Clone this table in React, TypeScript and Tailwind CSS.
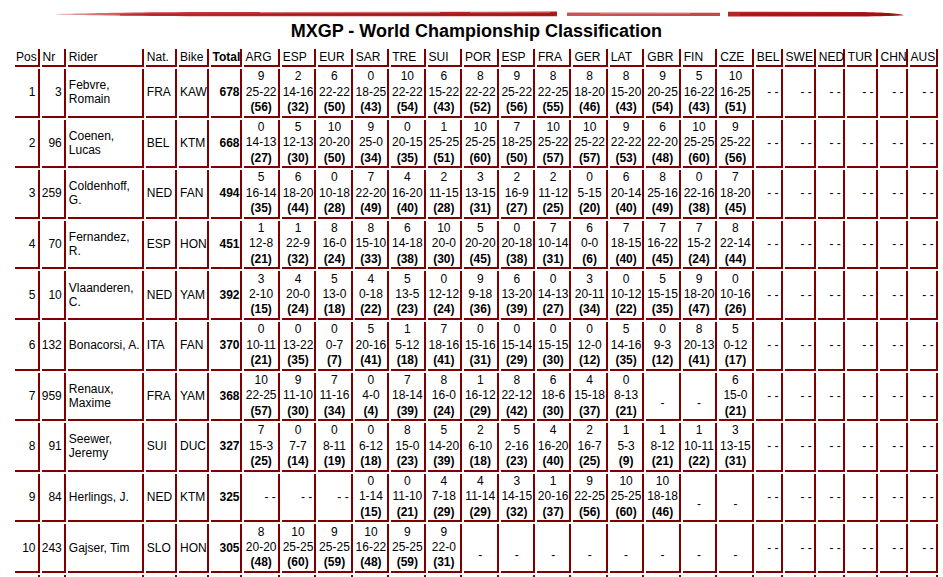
import React from 'react';

const ROUNDS = ['ARG', 'ESP', 'EUR', 'SAR', 'TRE', 'SUI', 'POR', 'ESP', 'FRA', 'GER', 'LAT', 'GBR', 'FIN', 'CZE'];
const EXTRA = ['BEL', 'SWE', 'NED', 'TUR', 'CHN', 'AUS'];

type Row = { pos: string; nr: string; name: string; nat: string; bike: string; total: string; r: string };

const ROWS: Row[] = [
  { pos: '1', nr: '3', name: 'Febvre, Romain', nat: 'FRA', bike: 'KAW', total: '678', r: '9 25-22 56|2 14-16 32|6 22-22 50|0 18-25 43|10 22-22 54|6 15-22 43|8 22-22 52|9 25-22 56|8 22-25 55|8 18-20 46|8 15-20 43|9 20-25 54|5 16-22 43|10 16-25 51' },
  { pos: '2', nr: '96', name: 'Coenen, Lucas', nat: 'BEL', bike: 'KTM', total: '668', r: '0 14-13 27|5 12-13 30|10 20-20 50|9 25-0 34|0 20-15 35|1 25-25 51|10 25-25 60|7 18-25 50|10 25-22 57|10 25-22 57|9 22-22 53|6 22-20 48|10 25-25 60|9 25-22 56' },
  { pos: '3', nr: '259', name: 'Coldenhoff, G.', nat: 'NED', bike: 'FAN', total: '494', r: '5 16-14 35|6 18-20 44|0 10-18 28|7 22-20 49|4 16-20 40|2 11-15 28|3 13-15 31|2 16-9 27|2 11-12 25|0 5-15 20|6 20-14 40|8 25-16 49|0 22-16 38|7 18-20 45' },
  { pos: '4', nr: '70', name: 'Fernandez, R.', nat: 'ESP', bike: 'HON', total: '451', r: '1 12-8 21|1 22-9 32|8 16-0 24|8 15-10 33|6 14-18 38|10 20-0 30|5 20-20 45|0 20-18 38|7 10-14 31|6 0-0 6|7 18-15 40|7 16-22 45|7 15-2 24|8 22-14 44' },
  { pos: '5', nr: '10', name: 'Vlaanderen, C.', nat: 'NED', bike: 'YAM', total: '392', r: '3 2-10 15|4 20-0 24|5 13-0 18|4 0-18 22|5 13-5 23|0 12-12 24|9 9-18 36|6 13-20 39|0 14-13 27|3 20-11 34|0 10-12 22|5 15-15 35|9 18-20 47|0 10-16 26' },
  { pos: '6', nr: '132', name: 'Bonacorsi, A.', nat: 'ITA', bike: 'FAN', total: '370', r: '0 10-11 21|0 13-22 35|0 0-7 7|5 20-16 41|1 5-12 18|7 18-16 41|0 15-16 31|0 15-14 29|0 15-15 30|0 12-0 12|5 14-16 35|0 9-3 12|8 20-13 41|5 0-12 17' },
  { pos: '7', nr: '959', name: 'Renaux, Maxime', nat: 'FRA', bike: 'YAM', total: '368', r: '10 22-25 57|9 11-10 30|7 11-16 34|0 4-0 4|7 18-14 39|8 16-0 24|1 16-12 29|8 22-12 42|6 18-6 30|4 15-18 37|0 8-13 21|-|-|6 15-0 21' },
  { pos: '8', nr: '91', name: 'Seewer, Jeremy', nat: 'SUI', bike: 'DUC', total: '327', r: '7 15-3 25|0 7-7 14|0 8-11 19|0 6-12 18|8 15-0 23|5 14-20 39|2 6-10 18|5 2-16 23|4 16-20 40|2 16-7 25|1 5-3 9|1 8-12 21|1 10-11 22|3 13-15 31' },
  { pos: '9', nr: '84', name: 'Herlings, J.', nat: 'NED', bike: 'KTM', total: '325', r: '--|--|--|0 1-14 15|0 11-10 21|4 7-18 29|4 11-14 29|3 14-15 32|1 20-16 37|9 22-25 56|10 25-25 60|10 18-18 46|-|-' },
  { pos: '10', nr: '243', name: 'Gajser, Tim', nat: 'SLO', bike: 'HON', total: '305', r: '8 20-20 48|10 25-25 60|9 25-25 59|10 16-22 48|9 25-25 59|9 22-0 31|-|-|-|-|-|-|-|-' },
];

const BD = 'border-r-2 border-b-2 border-[#800000]';
const BODY = 'border-r-2 border-b-2 border-[#800000] h-[48.6px] align-middle';

function RoundCell({ v }: { v: string }) {
  if (v === '--') {
    return <td className={`${BODY} text-right whitespace-nowrap pr-[2px]`}>- -</td>;
  }
  if (v === '-') {
    return (
      <td className={`${BODY} text-center leading-[15.4px]`}>
        <div>&nbsp;</div>
        <div>-</div>
      </td>
    );
  }
  const [a, b, c] = v.split(' ');
  return (
    <td className={`${BODY} text-center leading-[15.4px] whitespace-nowrap`}>
      <div>{a}</div>
      <div>{b}</div>
      <div className="font-bold">({c})</div>
    </td>
  );
}

function Brush() {
  return (
    <svg width="943" height="20" viewBox="0 0 943 20" className="block">
      <defs>
        <linearGradient id="bg1" x1="57" y1="0" x2="560" y2="0" gradientUnits="userSpaceOnUse">
          <stop offset="0" stopColor="#e7a5a5" />
          <stop offset="0.18" stopColor="#c23a3a" />
          <stop offset="1" stopColor="#b31d1d" />
        </linearGradient>
        <linearGradient id="bg2" x1="560" y1="0" x2="905" y2="0" gradientUnits="userSpaceOnUse">
          <stop offset="0" stopColor="#c03a3a" />
          <stop offset="0.5" stopColor="#b82525" />
          <stop offset="1" stopColor="#a51414" />
        </linearGradient>
      </defs>
      <path d="M57 14 C 90 13.2, 130 12.3, 200 12 L 557 11.6 L 557 16.2 L 200 16.3 C 130 16.1, 90 15.3, 57 14.6 Z" fill="url(#bg1)" />
      <path d="M567 12.6 L 720 12.8 L 720 16 L 567 16.1 Z" fill="url(#bg2)" opacity="0.85" />
      <path d="M728 11.7 L 860 12 C 885 12.4, 898 13.4, 904 15.2 C 895 16, 880 16.3, 860 16.4 L 728 16.4 Z" fill="url(#bg2)" />
      <path d="M120 14.2 L 555 13.6 L 555 15.6 L 120 15.6 Z" fill="#9a0c0c" opacity="0.55" />
      <path d="M740 13.4 L 890 13.8 L 890 15.6 L 740 15.6 Z" fill="#960a0a" opacity="0.55" />
      <rect x="260" y="12.2" width="180" height="0.7" fill="#ffffff" opacity="0.45" />
      <rect x="470" y="12.1" width="80" height="0.6" fill="#ffffff" opacity="0.4" />
      <rect x="600" y="13" width="90" height="0.6" fill="#ffffff" opacity="0.4" />
    </svg>
  );
}

export default function App() {
  return (
    <div className="bg-white text-black font-['Liberation_Sans',Arial,sans-serif] min-h-[577px]">
      <Brush />
      <div className="ml-[13px] w-[926.68px] h-[22px] leading-[22px] text-center text-[18px] font-bold">
        MXGP - World Championship Classification
      </div>
      <table className="mt-[4.5px] ml-[13px] w-[926.68px] table-fixed border-separate border-spacing-[2px] text-[12px]">
        <colgroup>
          <col className="w-[24.5px]" />
          <col className="w-[24.3px]" />
          <col className="w-[76px]" />
          <col className="w-[31.2px]" />
          <col className="w-[30.5px]" />
          <col className="w-[31px]" />
          <col className="w-[35.3px]" />
          {ROUNDS.slice(1).map((_, i) => (
            <col key={i} className="w-[34.46px]" />
          ))}
          <col className="w-[26.9px]" />
          <col className="w-[31.3px]" />
          <col className="w-[27px]" />
          <col className="w-[30.7px]" />
          <col className="w-[28px]" />
          <col className="w-[28px]" />
        </colgroup>
        <thead>
          <tr>
            {['Pos', 'Nr', 'Rider', 'Nat.', 'Bike'].map((h) => (
              <th key={h} className={`${BD} h-[18.5px] font-normal text-left align-middle leading-[14px] pl-[1px] whitespace-nowrap`}>
                {h}
              </th>
            ))}
            <th className={`${BD} h-[18.5px] font-bold text-left align-middle leading-[14px] pl-[1px] whitespace-nowrap`}>Total</th>
            {ROUNDS.concat(EXTRA).map((h, i) => (
              <th key={i} className={`${BD} h-[18.5px] font-normal text-left align-middle leading-[14px] pl-[1px] whitespace-nowrap`}>
                {h}
              </th>
            ))}
          </tr>
        </thead>
        <tbody>
          {ROWS.map((row) => (
            <tr key={row.pos}>
              <td className={`${BODY} text-right pr-[2px]`}>{row.pos}</td>
              <td className={`${BODY} text-right pr-[2px]`}>{row.nr}</td>
              <td className={`${BODY} text-left pl-[1px] pr-[1px] leading-[14px]`}>{row.name}</td>
              <td className={`${BODY} text-left pl-[1px]`}>{row.nat}</td>
              <td className={`${BODY} text-left pl-[1px]`}>{row.bike}</td>
              <td className={`${BODY} text-right pr-[1px] font-bold`}>{row.total}</td>
              {row.r.split('|').map((v, i) => (
                <RoundCell key={i} v={v} />
              ))}
              {EXTRA.map((_, i) => (
                <RoundCell key={'x' + i} v="--" />
              ))}
            </tr>
          ))}
          <tr>
            {Array.from({ length: 26 }).map((_, i) => (
              <td key={i} className={BODY}>&nbsp;</td>
            ))}
          </tr>
        </tbody>
      </table>
    </div>
  );
}
